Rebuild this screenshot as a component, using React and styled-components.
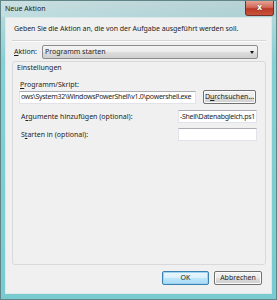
import React from "react";
import styled, { createGlobalStyle } from "styled-components";

const Global = createGlobalStyle`
  html, body { margin: 0; padding: 0; width: 277px; height: 300px; overflow: hidden; background: #fff; }
  body { font-family: "Noto Sans", "Open Sans", sans-serif; color: #1e1e1e; }
  * { box-sizing: border-box; }
`;

const Window = styled.div`
  width: 277px;
  height: 300px;
  display: flex;
  flex-direction: column;
  border: 1px solid #5f8589;
  background: linear-gradient(to bottom, #c2d9db 0px, #b3d8db 16px, #86d0d4 60px, #79cbcf 100%);
`;

const TitleBar = styled.div`
  height: 16px;
  flex: none;
  display: flex;
  justify-content: space-between;
  align-items: flex-start;
  padding-left: 4px;
  background: linear-gradient(to right, rgba(255,255,255,0.15), rgba(120,160,165,0.15));
`;

const Title = styled.div`
  font-size: 7px;
  line-height: 8px;
  margin-top: 4px;
  color: #1a1a1a;
`;

const CloseButton = styled.div`
  width: 29px;
  height: 15px;
  margin-right: 2px;
  border: 1px solid #7a3027;
  border-top: none;
  border-radius: 0 0 3px 3px;
  background: linear-gradient(to bottom, #e7a193 0%, #d06a57 45%, #b93a26 55%, #c9533b 100%);
  display: flex;
  align-items: center;
  justify-content: center;
  color: #fff;
  font-family: "DejaVu Sans", sans-serif;
  font-weight: bold;
  font-size: 8px;
  line-height: 8px;
  text-shadow: 0 0 1px #5a1a10;
`;

const Client = styled.div`
  flex: 1;
  margin: 0 4px 5px 4px;
  background: #f0f0f0;
  border: 1px solid #dfe8e9;
  padding: 0 5px 0 6px;
  display: flex;
  flex-direction: column;
`;

const Intro = styled.div`
  font-size: 7px;
  line-height: 10px;
  margin-top: 6px;
  padding-left: 2px;
  white-space: nowrap;
  letter-spacing: -0.05px;
`;

const Separator = styled.div`
  margin-top: 6px;
  border-top: 1px solid #d5d5d5;
  border-bottom: 1px solid #fcfcfc;
`;

const ActionRow = styled.div`
  margin-top: 3px;
  height: 14px;
  display: flex;
  align-items: center;
  padding-left: 2px;
  padding-right: 8px;
`;

const Label = styled.span`
  font-size: 7px;
  line-height: 10px;
  white-space: nowrap;
  width: ${(p) => (p.$width ? p.$width + "px" : "auto")};
  flex: ${(p) => (p.$grow ? 1 : "none")};
  padding-left: ${(p) => p.$indent || 0}px;
  u { text-decoration: underline; text-underline-offset: 1px; }
`;

const Combo = styled.div`
  flex: 1;
  height: 14px;
  border: 1px solid #8b8c8c;
  border-radius: 2px;
  background: linear-gradient(to bottom, #f4f4f4 0%, #ebebeb 50%, #dddddd 51%, #cfcfcf 100%);
  display: flex;
  align-items: center;
  justify-content: space-between;
  padding: 0 3px 0 2px;
  font-size: 7px;
  line-height: 10px;
`;

const Arrow = styled.span`
  width: 0;
  height: 0;
  border-left: 2.5px solid transparent;
  border-right: 2.5px solid transparent;
  border-top: 3px solid #111;
`;

const GroupBox = styled.div`
  margin-top: 2px;
  height: 204px;
  border: 1px solid #d9d9d9;
  border-radius: 3px;
  padding: 1px 0 0 6px;
  display: flex;
  flex-direction: column;
`;

const Legend = styled.div`
  font-size: 7px;
  line-height: 10px;
  margin-left: -2px;
`;

const FieldLabel = styled.div`
  font-size: 7px;
  line-height: 10px;
  margin-top: 7px;
  padding-left: 1px;
  u { text-decoration: underline; text-underline-offset: 1px; }
`;

const Row = styled.div`
  display: flex;
  align-items: center;
  margin-top: ${(p) => p.$top || 0}px;
  padding-right: ${(p) => p.$right || 0}px;
  gap: 7px;
`;

const TextBox = styled.div`
  width: ${(p) => p.$width}px;
  height: 13px;
  flex: none;
  background: #fff;
  border: 1px solid #e2e3ea;
  border-top-color: #abadb3;
  overflow: hidden;
  white-space: nowrap;
  display: flex;
  align-items: center;
  justify-content: ${(p) => (p.$end ? "flex-end" : "flex-start")};
  padding: 0 1px;
  font-size: 7px;
  line-height: 10px;
  letter-spacing: -0.28px;
`;

const Button = styled.div`
  width: ${(p) => p.$width}px;
  height: 14px;
  flex: none;
  border: 1px solid ${(p) => (p.$primary ? "#3c7fb1" : "#707070")};
  border-radius: 2px;
  background: ${(p) =>
    p.$primary
      ? "linear-gradient(to bottom, #eaf6fd 0%, #d9f0fc 50%, #bee6fd 51%, #a7d9f5 100%)"
      : "linear-gradient(to bottom, #f2f2f2 0%, #ebebeb 50%, #dddddd 51%, #cfcfcf 100%)"};
  box-shadow: ${(p) => (p.$primary ? "inset 0 0 0 1px #9ed4f2" : "inset 0 0 0 1px #fbfbfb")};
  display: flex;
  align-items: center;
  justify-content: center;
  font-size: 7px;
  line-height: 10px;
  u { text-decoration: underline; text-underline-offset: 1px; }
`;

const Footer = styled.div`
  margin-top: 6px;
  display: flex;
  justify-content: flex-end;
  gap: 5px;
  padding-right: 4px;
`;

export default function App() {
  return (
    <>
      <Global />
      <Window>
        <TitleBar>
          <Title>Neue Aktion</Title>
          <CloseButton>x</CloseButton>
        </TitleBar>
        <Client>
          <Intro>Geben Sie die Aktion an, die von der Aufgabe ausgeführt werden soll.</Intro>
          <Separator />
          <ActionRow>
            <Label $width={28}><u>A</u>ktion:</Label>
            <Combo>
              <span>Programm starten</span>
              <Arrow />
            </Combo>
          </ActionRow>
          <GroupBox>
            <Legend>Einstellungen</Legend>
            <FieldLabel><u>P</u>rogramm/Skript:</FieldLabel>
            <Row $right={9}>
              <TextBox $width={177}>ows\System32\WindowsPowerShell\v1.0\powershell.exe</TextBox>
              <Button $width={53}>D<u>u</u>rchsuchen...</Button>
            </Row>
            <Row $top={6} $right={8}>
              <Label $grow $indent={2}>A<u>r</u>gumente hinzufügen (optional):</Label>
              <TextBox $width={79} $end>-Shell\Datenabgleich.ps1</TextBox>
            </Row>
            <Row $top={5} $right={8}>
              <Label $grow $indent={2}>S<u>t</u>arten in (optional):</Label>
              <TextBox $width={79} />
            </Row>
          </GroupBox>
          <Footer>
            <Button $width={47} $primary>OK</Button>
            <Button $width={48}>Abbrechen</Button>
          </Footer>
        </Client>
      </Window>
    </>
  );
}
